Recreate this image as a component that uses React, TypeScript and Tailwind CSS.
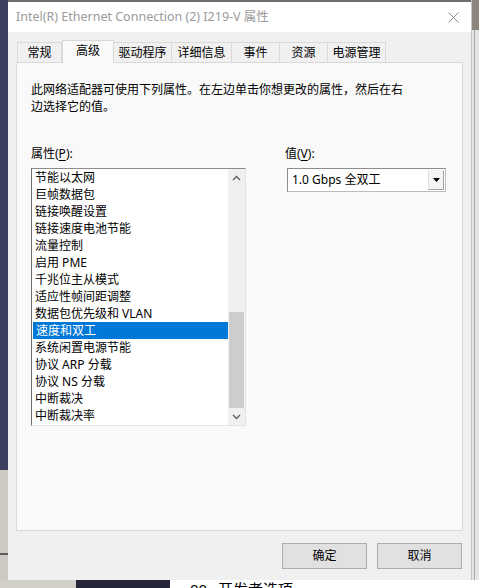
import React from "react";

const FONT = "'Noto Sans', 'Noto Sans CJK SC', sans-serif";

const items = [
  "节能以太网",
  "巨帧数据包",
  "链接唤醒设置",
  "链接速度电池节能",
  "流量控制",
  "启用 PME",
  "千兆位主从模式",
  "适应性帧间距调整",
  "数据包优先级和 VLAN",
  "速度和双工",
  "系统闲置电源节能",
  "协议 ARP 分载",
  "协议 NS 分载",
  "中断裁决",
  "中断裁决率",
];

const tabs: { label: string; w: string; active?: boolean }[] = [
  { label: "常规", w: "w-[45px]" },
  { label: "高级", w: "w-[52px]", active: true },
  { label: "驱动程序", w: "w-[58px]" },
  { label: "详细信息", w: "w-[60px]" },
  { label: "事件", w: "w-[48px]" },
  { label: "资源", w: "w-[48px]" },
  { label: "电源管理", w: "w-[58px]" },
];

function Chevron({ up }: { up?: boolean }) {
  return (
    <svg width="9" height="6" viewBox="0 0 9 6">
      <path
        d={up ? "M1 5 L4.5 1.5 L8 5" : "M1 1 L4.5 4.5 L8 1"}
        fill="none"
        stroke="#606060"
        strokeWidth="1.4"
      />
    </svg>
  );
}

export default function App() {
  return (
    <div
      className="w-[479px] h-[588px] flex flex-col overflow-hidden text-[12px] text-black"
      style={{ fontFamily: FONT }}
    >
      <div className="flex h-[580px]">
        {/* left desktop strip */}
        <div className="w-[8px] flex flex-col">
          <div className="h-[470px] bg-[#3e405f]" />
          <div className="flex-1 bg-[#cdc9c3] flex flex-col">
            <div className="h-[83px]" />
            <div className="h-[2px] bg-[#5a5a5a]" />
          </div>
        </div>

        {/* window */}
        <div className="w-[464px] flex flex-col border-r border-[#c4c4c4]">
          <div className="h-[2px] bg-[#6e6e6e]" />
          <div className="h-[30px] bg-white flex items-center justify-between pl-[8px] pr-[12px]">
            <span className="text-[#9a9a9a] text-[12.5px] whitespace-nowrap">
              Intel(R) Ethernet Connection (2) I219-V 属性
            </span>
            <svg width="11" height="11" viewBox="0 0 11 11">
              <path d="M0.5 0.5 L10.5 10.5 M10.5 0.5 L0.5 10.5" stroke="#8a8a8a" strokeWidth="1" />
            </svg>
          </div>

          <div className="flex-1 bg-[#f0f0f0] pl-[8px] pr-[8px] pt-[8px] flex flex-col">
            {/* tabs */}
            <div className="h-[22px] flex items-end pl-[1px]">
              {tabs.map((t) =>
                t.active ? (
                  <div
                    key={t.label}
                    className={`${t.w} h-[23px] -mb-px relative z-10 bg-[#f9f9f9] border border-b-0 border-[#d9d9d9] flex items-center justify-center pb-[3px]`}
                  >
                    {t.label}
                  </div>
                ) : (
                  <div
                    key={t.label}
                    className={`${t.w} h-[20px] bg-[#f0f0f0] border border-b-0 border-l-0 first:border-l border-[#d9d9d9] flex items-center justify-center`}
                  >
                    {t.label}
                  </div>
                )
              )}
            </div>

            {/* panel */}
            <div className="h-[469px] bg-[#f9f9f9] border border-[#d9d9d9] pl-[14px] pt-[18px]">
              <p className="leading-[17px] whitespace-nowrap">
                此网络适配器可使用下列属性。在左边单击你想更改的属性，然后在右
                <br />
                边选择它的值。
              </p>

              <div className="flex mt-[30px]">
                {/* left column */}
                <div className="w-[215px] flex flex-col">
                  <div className="h-[17px] leading-[17px]">
                    属性(<span className="underline underline-offset-2">P</span>):
                  </div>
                  <div className="mt-[6px] h-[258px] bg-white border border-t-[#8c8c8c] border-l-[#6e6e6e] border-r-[#e3e3e3] border-b-[#e3e3e3] flex">
                    <div className="flex-1 flex flex-col">
                      {items.map((it, i) => (
                        <div
                          key={it}
                          className={`h-[17px] leading-[17px] pl-[3px] whitespace-nowrap ${
                            i === 9 ? "bg-[#0078d7] text-white ml-px" : ""
                          }`}
                        >
                          {it}
                        </div>
                      ))}
                    </div>
                    <div className="w-[17px] bg-[#f0f0f0] flex flex-col">
                      <div className="h-[17px] flex items-center justify-center">
                        <Chevron up />
                      </div>
                      <div className="flex-1" />
                      <div className="h-[96px] mx-px bg-[#cdcdcd]" />
                      <div className="h-[17px] flex items-center justify-center">
                        <Chevron />
                      </div>
                    </div>
                  </div>
                </div>

                {/* right column */}
                <div className="ml-[39px] flex flex-col">
                  <div className="h-[17px] leading-[17px]">
                    值(<span className="underline underline-offset-2">V</span>):
                  </div>
                  <div className="mt-[6px] ml-[2px] w-[159px] h-[24px] bg-white border border-t-[#8c8c8c] border-l-[#8c8c8c] border-r-[#bdbdbd] border-b-[#bdbdbd] flex">
                    <div className="flex-1 flex items-center pl-[4px] whitespace-nowrap">
                      1.0 Gbps 全双工
                    </div>
                    <div className="w-[16px] my-px mr-px bg-[#f4f4f4] border border-t-[#f0f0f0] border-l-[#e0e0e0] border-r-[#a0a0a0] border-b-[#a0a0a0] flex items-center justify-center">
                      <svg width="7" height="4" viewBox="0 0 7 4">
                        <path d="M0 0 L7 0 L3.5 4 Z" fill="#000" />
                      </svg>
                    </div>
                  </div>
                </div>
              </div>
            </div>

            {/* buttons */}
            <div className="mt-[12px] flex justify-end gap-[10px] pr-px">
              <button className="w-[85px] h-[26px] bg-[#e1e1e1] border border-[#adadad] flex items-center justify-center">
                确定
              </button>
              <button className="w-[85px] h-[26px] bg-[#e1e1e1] border border-[#adadad] flex items-center justify-center">
                取消
              </button>
            </div>
          </div>
        </div>

        {/* right desktop strip */}
        <div className="w-[7px] flex flex-col">
          <div className="h-[30px] bg-[#8b857e]" />
          <div className="flex-1 bg-[#e4e4e4] flex">
            <div className="w-[2px]" />
            <div className="w-px bg-[#a8a8a8]" />
          </div>
        </div>
      </div>

      {/* bottom desktop strip */}
      <div className="h-[8px] flex overflow-hidden">
        <div className="w-[76px] bg-[#d2cec8]" />
        <div className="w-[94px] bg-[#25253a]" />
        <div className="flex-1 bg-white relative overflow-hidden">
          <div className="absolute left-[20px] top-[0px] text-[15px] leading-[18px] whitespace-nowrap">
            00
          </div>
          <div className="absolute left-[48px] top-[0px] text-[15px] leading-[18px] whitespace-nowrap">
            开发者选项
          </div>
        </div>
      </div>
    </div>
  );
}
